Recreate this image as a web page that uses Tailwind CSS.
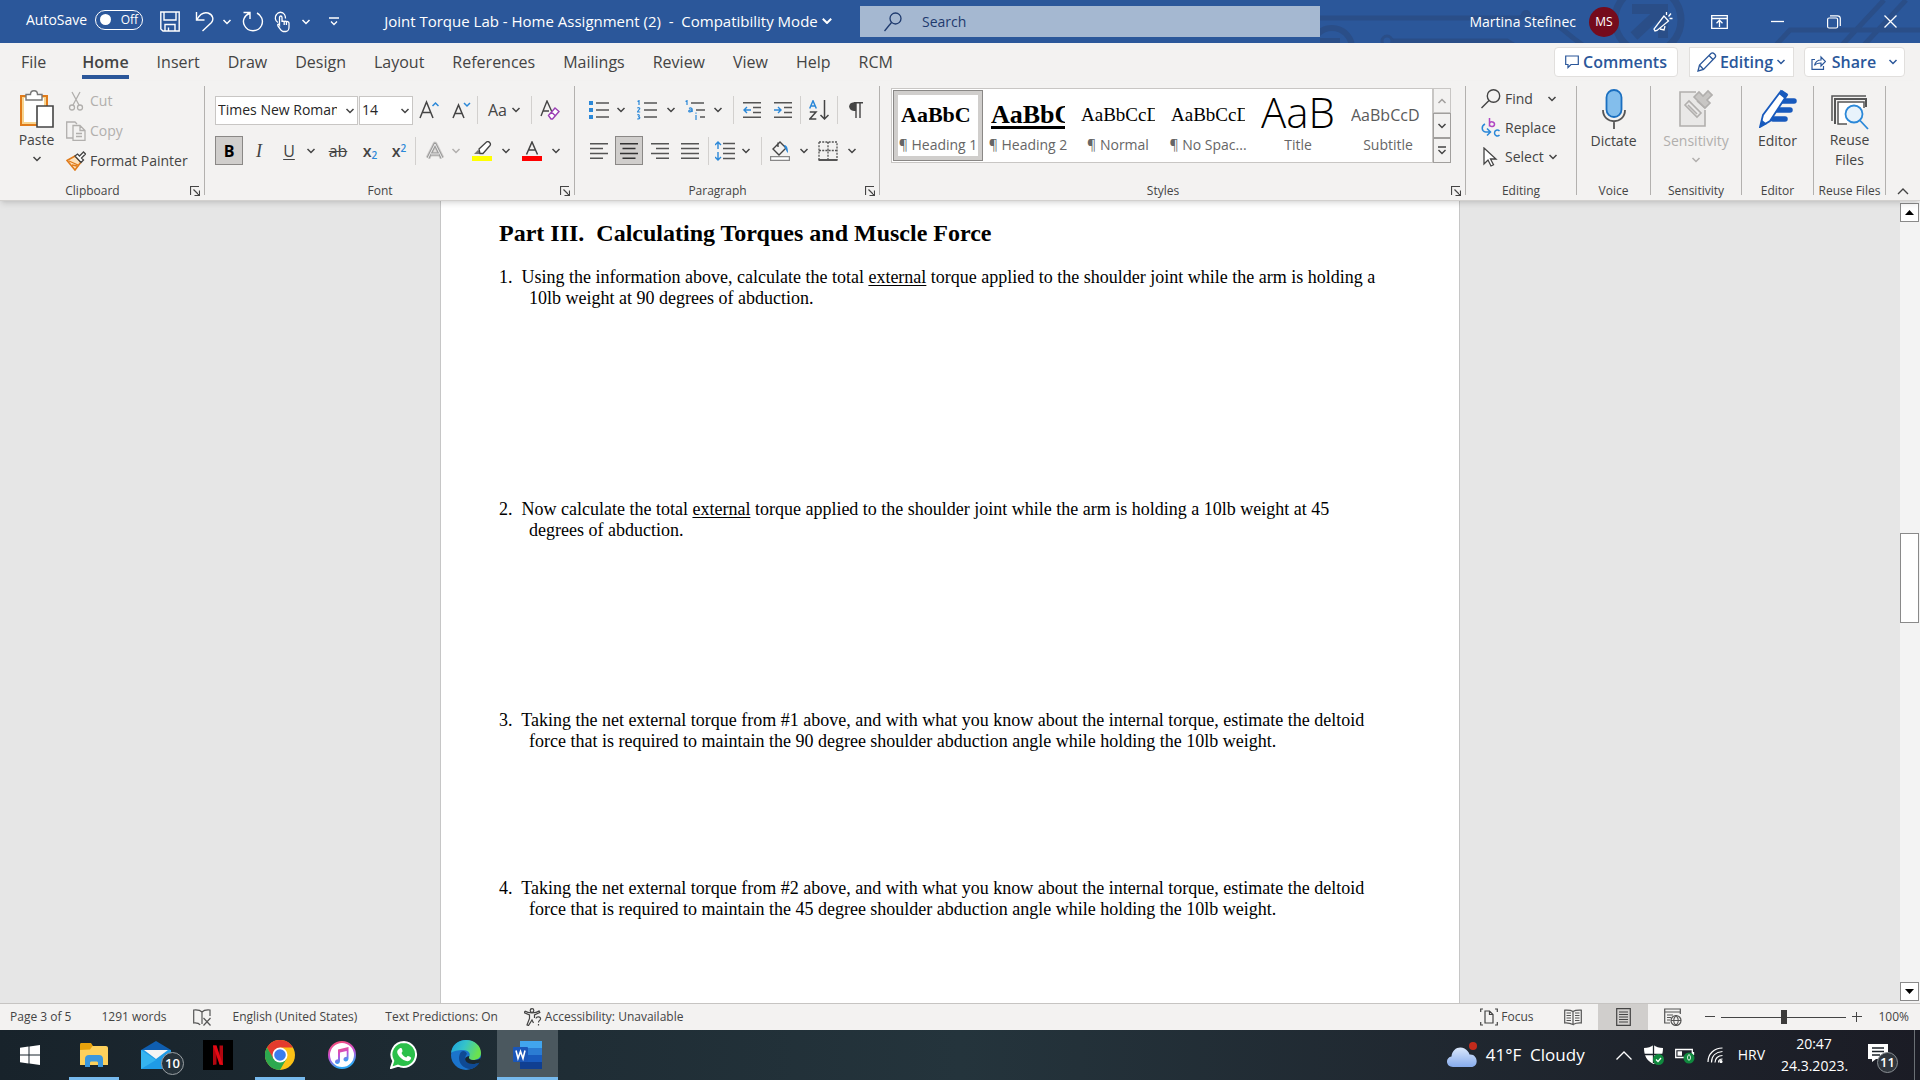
<!DOCTYPE html>
<html lang="en">
<head>
<meta charset="utf-8">
<title>Joint Torque Lab - Home Assignment (2)</title>
<script src="https://cdn.jsdelivr.net/npm/@tailwindcss/browser@4"></script>
</head>
<body class="flex h-screen flex-col overflow-hidden bg-[#e6e6e6] font-['Open_Sans',sans-serif] text-sm text-[#444444]">

<!-- shared glyphs -->
<svg class="hidden">
  <symbol id="chev" viewBox="0 0 10 6"><path d="M1.500 1 5 4.500 8.500 1" fill="none" stroke="currentColor" stroke-width="1.500"/></symbol>
  <symbol id="launch" viewBox="0 0 10 10"><path d="M.5 9V.5H9M3.500 3.500l5.500 5.500M9.500 4.500v5h-5" fill="none" stroke="currentColor" stroke-width="1.200"/></symbol>
</svg>

<!-- title bar -->
<header class="relative flex h-[43px] shrink-0 items-center bg-[#2b579a] text-white">
  <svg class="absolute top-0 right-0 h-[43px] w-[600px]" viewBox="0 0 600 43" fill="none" stroke="#2a4e88" stroke-width="5">
    <path d="M0 18h200l8-4M72 41h115l8 5M214 18c22 0 24 10 50 28M456 45l14-15h130M522 45l42-45M544 45l42-45"/>
    <circle cx="206" cy="15" r="5" fill="#2a4e88" stroke="none"/><circle cx="67" cy="41" r="5" stroke-width="3"/>
    <circle cx="12" cy="48" r="20" stroke-width="6"/><path d="M-1 38h21v8H-1z" fill="#2a4e88" stroke="none"/>
    <circle cx="328" cy="20" r="33" stroke-width="7"/>
    <path d="M312 9h31v29M342 10l-28 26" stroke-width="10"/>
  </svg>
  <div class="relative flex w-full items-center">
    <label class="ml-[26px] flex items-center gap-2 pb-1"><span>AutoSave</span>
      <span class="relative flex h-5 w-12 items-center rounded-full border border-white px-1">
        <input type="checkbox" class="absolute inset-0 m-0 appearance-none">
        <span class="size-[11px] rounded-full bg-white"></span><span class="flex-1 text-right text-xs">Off</span>
      </span>
    </label>
    <button class="ml-[17px] flex" aria-label="Save"><svg class="h-[21px] w-5" viewBox="0 0 20 21" fill="none" stroke="white" stroke-width="1.400"><path d="M.8 1h18.400v19H3L.8 18zM4 1v8h12V1M5 20v-6.500h10V20M8.500 20v-3.500"/></svg></button>
    <button class="ml-[15px] flex" aria-label="Undo"><svg class="h-[21px] w-5" viewBox="0 0 20 21" fill="none" stroke="white" stroke-width="1.400"><path d="M1.500 1v8h8M2 8.500C5 3 9 1 13 2c5 1.500 6 6.500 3.500 9.500L7.500 20"/></svg></button>
    <button class="ml-[7px] flex" aria-label="Undo history"><svg class="h-1.5 w-2.5"><use href="#chev"/></svg></button>
    <button class="ml-[10px] flex" aria-label="Redo"><svg class="h-[21px] w-[22px]" viewBox="0 0 22 21" fill="none" stroke="white" stroke-width="1.400"><path d="M1.500 1.500h6.500v6.500M8 2C2 4.500 0 10 2.500 14.500c3.500 7 13.500 7 17 0C22 9 19 4 15 2"/></svg></button>
    <button class="ml-[10px] flex" aria-label="Touch mode"><svg class="h-[22px] w-[18px]" viewBox="0 0 18 22" fill="none" stroke="white" stroke-width="1.300"><path d="M4 11.500C1 10 .5 6 2.500 3.500c2-3 6-3 8 0 1 1.500 1 2.500 1 4"/><path d="M5.500 14V6.500c0-2 2.500-2 2.500 0V11c0-1 2.200-1 2.200 0 0-1 2.200-1 2.200 0 0-1 2.600-.5 2.600 1v4c0 2-1 4.500-3 4.500H9c-2 0-3-3-5-5.500-1-1.500.5-2.500 1.500-1zM10.200 11v3M12.400 11v3"/></svg></button>
    <button class="ml-[9px] flex" aria-label="Touch mode options"><svg class="h-1.5 w-2.5"><use href="#chev"/></svg></button>
    <button class="ml-[18px] flex" aria-label="Customize Quick Access Toolbar"><svg class="h-[9px] w-[10px]" viewBox="0 0 10 9" fill="none" stroke="white" stroke-width="1.300"><path d="M0 1h10M2 4.500 5 7.500 8 4.500"/></svg></button>
    <button class="ml-[45px] flex items-center gap-1 text-[15px] whitespace-pre"><span>Joint Torque Lab - Home Assignment (2)  -  Compatibility Mode</span><svg class="h-1.5 w-2.5" viewBox="0 0 10 6" fill="none" stroke="white" stroke-width="2"><path d="M.8.800 5 5 9.200.800"/></svg></button>
    <label class="absolute left-[860px] flex h-[31px] w-[460px] items-center gap-5 bg-[#a5b8d1] pl-6 text-[#1e3a6e]">
      <svg class="h-5 w-[18px]" viewBox="0 0 18 20" fill="none" stroke="currentColor" stroke-width="1.300"><circle cx="11.500" cy="6.500" r="5.500"/><path d="M7.500 10.500.5 19"/></svg>
      <input type="search" aria-label="Search" placeholder="Search" class="flex-1 bg-transparent text-sm outline-none placeholder:text-[#1e3a6e]">
    </label>
    <div class="ml-auto flex items-center">
      <span>Martina Stefinec</span>
      <span class="ml-[13px] flex h-[30px] w-[30px] items-center justify-center rounded-full bg-[#750b1c] text-xs">MS</span>
      <button class="ml-[34px] flex" aria-label="Coming soon"><svg class="size-5" viewBox="0 0 20 20" fill="none" stroke="white" stroke-width="1.300"><path d="M11 4 1 17l1 2 2-.5L15.500 9zM7 17l4 1 1-4M13.500 3V0M15.500 4.500 18 1.500M16.500 6.500h3"/></svg></button>
      <button class="ml-[38px] flex" aria-label="Ribbon display options"><svg class="h-[14px] w-[17px]" viewBox="0 0 17 14" fill="none" stroke="white" stroke-width="1.300"><path d="M.7.7h15.600v12.600H.7zM.7 3.500h15.600M8.500 12V5.500M5.500 8.200l3-3 3 3"/></svg></button>
      <button class="ml-[43px] flex" aria-label="Minimize"><svg class="h-[14px] w-[13px]" viewBox="0 0 13 14" stroke="white" stroke-width="1.300"><path d="M0 6.500h13"/></svg></button>
      <button class="ml-[43px] flex" aria-label="Restore"><svg class="size-[14px]" viewBox="0 0 14 14" fill="none" stroke="white" stroke-width="1.200"><rect x=".6" y="3" width="10" height="10" rx="1.500"/><path d="M3 .8h7.500c2 0 2.800 1 2.800 2.800V11"/></svg></button>
      <button class="mr-[23px] ml-[43px] flex" aria-label="Close"><svg class="size-[13px]" viewBox="0 0 13 13" stroke="white" stroke-width="1.300"><path d="M.5.5l12 12M12.500.5l-12 12"/></svg></button>
    </div>
  </div>
</header>

<!-- tab row -->
<nav class="flex h-[38px] shrink-0 items-center bg-[#f3f2f1] pl-[21px] text-base">
  <div class="flex h-full items-center gap-7 leading-none">
    <a href="#" class="mr-2">File</a>
    <a href="#" class="relative font-semibold">Home<span class="absolute inset-x-0 top-[21px] h-1 bg-[#2b579a]"></span></a>
    <a href="#">Insert</a><a href="#">Draw</a><a href="#">Design</a><a href="#">Layout</a><a href="#">References</a><a href="#">Mailings</a><a href="#">Review</a><a href="#">View</a><a href="#">Help</a><a href="#">RCM</a>
  </div>
  <div class="mr-[15px] ml-auto flex items-center font-semibold text-[#2b579a]">
    <button class="flex h-[30px] w-[124px] items-center justify-center gap-1 rounded border border-[#e1dfdd] bg-white"><svg class="size-[14px]" viewBox="0 0 14 14" fill="none" stroke="currentColor" stroke-width="1.200"><path d="M.7 1h12.600v8.500H6L3 12.500v-3H.7z"/></svg>Comments</button>
    <button class="ml-[11px] flex h-[30px] w-[105px] items-center justify-center gap-[3px] border border-[#e1dfdd] bg-white"><svg class="size-5" viewBox="0 0 20 20" fill="none" stroke="currentColor" stroke-width="1.300"><path d="M1 19l1.500-6L14 1.500c2-2 6 2 4 4L6.500 17.500zM12 3.500l4.500 4.500M2.500 13l4 4.500"/></svg>Editing<svg class="h-1.5 w-2.5"><use href="#chev"/></svg></button>
    <button class="ml-[10px] flex h-[30px] w-[101px] items-center justify-center gap-1.5 rounded border border-[#e1dfdd] bg-white"><svg class="size-[15px]" viewBox="0 0 15 15" fill="none" stroke="currentColor" stroke-width="1.200"><path d="M4 4.500H1v9.800h11.500V11M3.500 10.500C4.500 6.500 6.500 5 10 5V2l4.500 4.500L10 11V8C7 8 5 8.500 3.500 10.500z"/></svg>Share<svg class="ml-1.5 h-1.5 w-2.5"><use href="#chev"/></svg></button>
  </div>
</nav>

<!-- ribbon -->
<div class="relative z-10 flex h-[120px] shrink-0 border-b border-[#d2d0ce] bg-[#f3f2f1] pt-[5px] shadow-md" role="toolbar" aria-label="Home ribbon">

  <section class="flex h-[109px] w-[205px] flex-col border-r border-[#b3b1af]">
    <div class="flex flex-1 pl-[14px]">
      <button class="flex w-[45px] flex-col items-center pt-1">
        <svg class="h-[38px] w-[34px]" viewBox="0 0 34 38" fill="none"><path d="M1 6h26v29H1z" fill="#f7d48f" stroke="#e07b1a" stroke-width="2"/><path d="M4 8h20v24H4z" fill="#fff"/><path d="M6 10V4.500h4.500c0-5 7-5 7 0H22V10z" fill="#fff" stroke="#777" stroke-width="1.400"/><path d="M17 16h16v21H17z" fill="#fff" stroke="#444" stroke-width="1.600"/></svg>
        <span class="leading-6">Paste</span><svg class="mt-1 h-1.5 w-2.5"><use href="#chev"/></svg>
      </button>
      <div class="ml-[7px] flex flex-col">
        <button class="flex h-[30px] items-center gap-1 text-[#b1afad]"><svg class="h-5 w-5" viewBox="0 0 20 20" fill="none" stroke="currentColor" stroke-width="1.300"><path d="M6 1l7 13M14 1 7 14"/><circle cx="6" cy="16.500" r="2.500"/><circle cx="14" cy="16.500" r="2.500"/></svg>Cut</button>
        <button class="flex h-[30px] items-center gap-1 text-[#b1afad]"><svg class="h-5 w-5" viewBox="0 0 20 20" fill="none" stroke="currentColor" stroke-width="1.300"><path d="M7 17H.7V1H9l2 2M7 4.500h7l5 5v10H7zM14 4.500v5h5M10 12.500h6M10 15.500h6"/></svg>Copy</button>
        <button class="flex h-[30px] items-center gap-1"><svg class="h-5 w-5" viewBox="0 0 20 20" fill="none" stroke-width="1.300"><path d="M1 9.500 9 5l6 6-6 8z" fill="#fde2bd" stroke="#e07b1a" stroke-width="1.600"/><path d="M3 10l9 4M6 14l5 1" stroke="#e07b1a"/><path d="M9 5l2.500-2 2 2L17.500 1l2 2-4 4 2 2-2.500 2.500z" fill="#fff" stroke="#444"/></svg>Format Painter</button>
      </div>
    </div>
    <div class="flex h-2 items-center text-xs leading-2"><span class="flex-1 pr-[5px] text-center">Clipboard</span><button class="w-[14px]" aria-label="Clipboard settings"><svg class="size-[10px]"><use href="#launch"/></svg></button></div>
  </section>

  <section class="flex h-[109px] w-[370px] flex-col border-r border-[#b3b1af]">
    <div class="flex-1 pt-[9px] pl-[10px]">
      <div class="flex h-[30px] items-center">
        <span class="relative flex h-[29px] w-[143px]"><select aria-label="Font" class="w-full appearance-none border border-[#c8c6c4] bg-white pr-5 pl-0.5 text-sm text-[#262626]"><option>Times New Roman</option></select><svg class="absolute top-3 right-[3px] h-1.5 w-2.5"><use href="#chev"/></svg></span>
        <span class="relative ml-px flex h-[29px] w-[54px]"><select aria-label="Font size" class="w-full appearance-none border border-[#c8c6c4] bg-white pl-0.5 text-sm text-[#262626]"><option>14</option></select><svg class="absolute top-3 right-[3px] h-1.5 w-2.5"><use href="#chev"/></svg></span>
        <button class="flex w-8 justify-center" aria-label="Grow font"><svg class="size-5" viewBox="0 0 20 20" fill="none" stroke="#444" stroke-width="1.500"><path d="M1 18 7.500 2 14 18M3.500 12.500h8"/><path d="M13.500 6 16.500 3l3 3" stroke="#2b88d8"/></svg></button>
        <button class="flex w-8 justify-center" aria-label="Shrink font"><svg class="size-5" viewBox="0 0 20 20" fill="none" stroke="#444" stroke-width="1.500"><path d="M2 18 7.500 5 13 18M4 13.500h7"/><path d="M13 3l3 3 3-3" stroke="#2b88d8"/></svg></button>
        <span class="h-7 w-px bg-[#d2d0ce]"></span>
        <button class="flex w-[53px] items-center justify-center gap-1 text-base" aria-label="Change case">Aa<svg class="h-1.5 w-2.5"><use href="#chev"/></svg></button>
        <span class="h-7 w-px bg-[#d2d0ce]"></span>
        <button class="flex w-9 justify-center" aria-label="Clear formatting"><svg class="size-5" viewBox="0 0 20 20" fill="none" stroke="#444" stroke-width="1.400"><path d="M1 16 7 1l5 11M3 11h6"/><path d="M8.500 15.500 15 8l4 3.500-6.500 7.500h-1.500zM11.500 12l4 4" fill="#fff" stroke="#9b3fb5"/></svg></button>
      </div>
      <div class="mt-[11px] flex h-[29px] items-center">
        <button class="h-[29px] w-7 border border-[#8a8886] bg-[#d0cecc] text-base font-bold text-black">B</button>
        <button class="w-8 font-['Liberation_Serif',serif] text-lg italic">I</button>
        <button class="w-7 text-base underline underline-offset-2">U</button>
        <button class="flex w-4 justify-center" aria-label="Underline options"><svg class="h-1.5 w-2.5"><use href="#chev"/></svg></button>
        <button class="w-[38px] text-base line-through">ab</button>
        <button class="w-[26px] text-base font-semibold whitespace-nowrap">x<sub class="text-[10px] text-[#2b88d8]">2</sub></button>
        <button class="w-8 text-base font-semibold whitespace-nowrap">x<sup class="text-[10px] text-[#2b88d8]">2</sup></button>
        <span class="mr-1 h-7 w-px bg-[#d2d0ce]"></span>
        <button class="flex w-[30px] justify-center" aria-label="Text effects"><svg class="size-5" viewBox="0 0 20 20" fill="none" stroke-linejoin="round"><path d="M3 17 10 3l7 14M6 13h8" stroke="#cfcdcb" stroke-width="5"/><path d="M3 17 10 3l7 14M6 13h8" stroke="#999" stroke-width="3"/><path d="M3 17 10 3l7 14M6 13h8" stroke="#f3f2f1"/></svg></button>
        <button class="flex w-3 justify-center text-[#b1afad]" aria-label="Text effects options"><svg class="h-1.5 w-2.5"><use href="#chev"/></svg></button>
        <button class="ml-0.5 flex w-9 justify-center" aria-label="Highlight color"><svg class="size-5" viewBox="0 0 20 20" fill="none" stroke="#444" stroke-width="1.300"><path d="M2 13l4-4 4 4z" fill="#777" stroke="none"/><path d="M7 8 14.500 1c2-1.500 5 1.500 3.500 3.500L11 12.500 8 12.500z" fill="#fff"/><path d="M0 15h20v5H0z" fill="#ff0" stroke="none"/></svg></button>
        <button class="flex w-3 justify-center" aria-label="Highlight options"><svg class="h-1.5 w-2.5"><use href="#chev"/></svg></button>
        <button class="ml-0.5 flex w-9 justify-center" aria-label="Font color"><svg class="size-5" viewBox="0 0 20 20" fill="none" stroke="#444" stroke-width="1.500"><path d="M4.500 13.500 10 1l5.500 12.500M6.500 9h7"/><path d="M0 15h20v5H0z" fill="#f00" stroke="none"/></svg></button>
        <button class="flex w-3 justify-center" aria-label="Font color options"><svg class="h-1.5 w-2.5"><use href="#chev"/></svg></button>
      </div>
    </div>
    <div class="flex h-2 items-center text-xs leading-2"><span class="flex-1 pr-[5px] text-center">Font</span><button class="w-[14px]" aria-label="Font settings"><svg class="size-[10px]"><use href="#launch"/></svg></button></div>
  </section>

  <section class="flex h-[109px] w-[305px] flex-col border-r border-[#b3b1af]">
    <div class="flex-1 pt-[9px] pl-[10px]">
      <div class="flex h-[30px] items-center">
        <button class="flex w-7 justify-center" aria-label="Bullets"><svg class="size-5" viewBox="0 0 20 20" stroke="#555" stroke-width="1.400"><path d="M7 3h13M7 10h13M7 17h13"/><path d="M0 1h4v4H0zM0 8h4v4H0zM0 15h4v4H0z" fill="#2b88d8" stroke="none"/></svg></button>
        <button class="flex w-4 justify-center" aria-label="Bullet options"><svg class="h-1.5 w-2.5"><use href="#chev"/></svg></button>
        <button class="flex w-9 justify-center" aria-label="Numbering"><svg class="size-5" viewBox="0 0 20 20" fill="none" stroke="#555" stroke-width="1.400"><path d="M7 3h13M7 10h13M7 17h13"/><path d="M.5 1.500 2 .7V5M.3 8.200c1-1 2.700-.5 2.400.6L.4 12h2.800M.3 15c1.500-.8 3 .8 1 1.800 2.500 0 1.500 2.700-1 2" stroke="#2b88d8" stroke-width="1.200"/></svg></button>
        <button class="flex w-3 justify-center" aria-label="Numbering options"><svg class="h-1.5 w-2.5"><use href="#chev"/></svg></button>
        <button class="flex w-9 justify-center" aria-label="Multilevel list"><svg class="size-5" viewBox="0 0 20 20" fill="none" stroke="#555" stroke-width="1.400"><path d="M6 3h13M11 10h9M15 17h5"/><path d="M.5 1.500 2 .7V5M4 8.500c1.500-1 3.200-.5 3.200 1V12M7 10c-2-.3-3.300.2-3.300 1.200s2 1 3.300-.2M11 15v5M11 12.500v1.200" stroke="#2b88d8" stroke-width="1.200"/></svg></button>
        <button class="mr-[10px] flex w-[10px] justify-center" aria-label="Multilevel options"><svg class="h-1.5 w-2.5"><use href="#chev"/></svg></button>
        <span class="h-7 w-px bg-[#d2d0ce]"></span>
        <button class="flex w-[35px] justify-center" aria-label="Decrease indent"><svg class="size-[18px]" viewBox="0 0 18 18" fill="none" stroke="#555" stroke-width="1.400"><path d="M0 1.700h18M10 6.500h8M10 11.500h8M0 16.300h18"/><path d="M8 9H1M4 6 1 9l3 3" stroke="#2b88d8"/></svg></button>
        <button class="mr-[3px] flex w-7 justify-center" aria-label="Increase indent"><svg class="size-[18px]" viewBox="0 0 18 18" fill="none" stroke="#555" stroke-width="1.400"><path d="M0 1.700h18M10 6.500h8M10 11.500h8M0 16.300h18"/><path d="M0 9h7M4 6l3 3-3 3" stroke="#2b88d8"/></svg></button>
        <span class="h-7 w-px bg-[#d2d0ce]"></span>
        <button class="flex w-9 justify-center" aria-label="Sort"><svg class="size-5" viewBox="0 0 20 20" fill="none" stroke="#444" stroke-width="1.500"><path d="M.7 8.500 4 .8l3.300 7.700M2 6h4" stroke="#2b88d8"/><path d="M.8 12H7L.8 19H7.300M15.500 0v19M11.500 15l4 4 4-4"/></svg></button>
        <span class="h-7 w-px bg-[#d2d0ce]"></span>
        <button class="flex w-9 justify-center" aria-label="Show paragraph marks"><svg class="h-4 w-[14px]" viewBox="0 0 14 16" fill="none" stroke="#444" stroke-width="1.400"><path d="M7 1v15M11 1v15M14 .8H5"/><path d="M7 .2H5C-1.500.2-1.500 9 5 9h2z" fill="#444" stroke="none"/></svg></button>
      </div>
      <div class="mt-[11px] flex h-[29px] items-center">
        <button class="flex w-7 justify-center" aria-label="Align left"><svg class="size-[18px]" viewBox="0 0 18 18" stroke="#555" stroke-width="1.400"><path d="M0 1.700h18M0 6.500h13M0 11.500h18M0 16.300h13"/></svg></button>
        <button class="mx-0.5 flex h-[29px] w-7 items-center justify-center border border-[#8a8886] bg-[#d0cecc]" aria-label="Center"><svg class="size-[18px]" viewBox="0 0 18 18" stroke="#333" stroke-width="1.400"><path d="M0 1.700h18M2.500 6.500h13M0 11.500h18M2.500 16.300h13"/></svg></button>
        <button class="flex w-[30px] justify-center" aria-label="Align right"><svg class="size-[18px]" viewBox="0 0 18 18" stroke="#555" stroke-width="1.400"><path d="M0 1.700h18M5 6.500h13M0 11.500h18M5 16.300h13"/></svg></button>
        <button class="mr-[3px] flex w-[30px] justify-center" aria-label="Justify"><svg class="size-[18px]" viewBox="0 0 18 18" stroke="#555" stroke-width="1.400"><path d="M0 1.700h18M0 6.500h18M0 11.500h18M0 16.300h18"/></svg></button>
        <span class="h-7 w-px bg-[#d2d0ce]"></span>
        <button class="flex w-8 justify-center" aria-label="Line spacing"><svg class="size-5" viewBox="0 0 20 20" fill="none" stroke="#555" stroke-width="1.400"><path d="M8 2.500h12M8 7.500h12M8 12.500h12M8 17.500h12"/><path d="M3 1v7M0 4l3-3 3 3M3 11v8M0 16l3 3 3-3" stroke="#2b88d8"/></svg></button>
        <button class="mr-[10px] flex w-[10px] justify-center" aria-label="Line spacing options"><svg class="h-1.5 w-2.5"><use href="#chev"/></svg></button>
        <span class="h-7 w-px bg-[#d2d0ce]"></span>
        <button class="flex w-9 justify-center" aria-label="Shading"><svg class="size-5" viewBox="0 0 20 20" fill="none" stroke="#444" stroke-width="1.400"><path d="M3 8l7-7 6 6-7 7zM8 1.500V6"/><path d="M14 4c2.500 0 4 2 4 8-1.500-1-2-3.500-3-5z" fill="#2b88d8" stroke="none"/><path d="M.6 15.600h18.800v3.800H.6z" fill="#fff" stroke="#888" stroke-width="1.200"/></svg></button>
        <button class="flex w-3 justify-center" aria-label="Shading options"><svg class="h-1.5 w-2.5"><use href="#chev"/></svg></button>
        <button class="flex w-9 justify-center" aria-label="Borders"><svg class="size-5" viewBox="0 0 20 20" fill="none" stroke="#555" stroke-width="1.300"><path d="M1 1h18v18M1 1v18M10 1v18M1 9.500h18" stroke-dasharray="2 1.200"/><path d="M.5 19h19" stroke-width="2"/></svg></button>
        <button class="flex w-3 justify-center" aria-label="Border options"><svg class="h-1.5 w-2.5"><use href="#chev"/></svg></button>
      </div>
    </div>
    <div class="flex h-2 items-center text-xs leading-2"><span class="flex-1 pr-[5px] text-center">Paragraph</span><button class="w-[14px]" aria-label="Paragraph settings"><svg class="size-[10px]"><use href="#launch"/></svg></button></div>
  </section>

  <section class="flex h-[109px] min-w-0 flex-1 flex-col border-r border-[#b3b1af]">
    <div class="flex flex-1 pt-0.5 pr-[14px] pl-[11px]">
      <div class="flex h-[75px] flex-1 overflow-hidden border border-[#c8c6c4] bg-white p-px text-sm text-[#666]">
        <button class="flex h-[71px] w-[90px] shrink-0 flex-col items-center border border-[#8a8886] bg-white whitespace-nowrap inset-ring-4 inset-ring-[#d0cecc]"><span class="flex h-10 w-[74px] items-end overflow-hidden font-['Liberation_Serif',serif] text-[22px] leading-8 font-bold text-black">AaBbC</span><span class="mt-1 leading-5">¶ Heading 1</span></button>
        <button class="flex h-[71px] w-[90px] shrink-0 flex-col items-center pt-px whitespace-nowrap"><span class="flex h-10 w-[74px] items-end overflow-hidden font-['Liberation_Serif',serif] text-[26px] leading-8 font-bold text-black underline decoration-3 underline-offset-3">AaBbC</span><span class="mt-1 leading-5">¶ Heading 2</span></button>
        <button class="flex h-[71px] w-[90px] shrink-0 flex-col items-center pt-px whitespace-nowrap"><span class="flex h-10 w-[74px] items-end overflow-hidden font-['Liberation_Serif',serif] text-[19px] leading-8 text-black">AaBbCcD</span><span class="mt-1 leading-5">¶ Normal</span></button>
        <button class="flex h-[71px] w-[90px] shrink-0 flex-col items-center pt-px whitespace-nowrap"><span class="flex h-10 w-[74px] items-end overflow-hidden font-['Liberation_Serif',serif] text-[19px] leading-8 text-black">AaBbCcD</span><span class="mt-1 leading-5">¶ No Spac...</span></button>
        <button class="flex h-[71px] w-[90px] shrink-0 flex-col items-center pt-2 whitespace-nowrap"><span class="flex h-[33px] w-[74px] items-end overflow-hidden text-[42px] leading-[38px] font-light text-black">AaB</span><span class="mt-1 leading-5">Title</span></button>
        <button class="flex h-[71px] w-[90px] shrink-0 flex-col items-center pt-px whitespace-nowrap"><span class="flex h-10 w-[74px] items-end overflow-hidden text-base leading-8 text-[#5a5a5a]">AaBbCcD</span><span class="mt-1 leading-5">Subtitle</span></button>
      </div>
      <div class="flex h-[75px] w-[18px] flex-col">
        <button class="flex flex-1 items-center justify-center border border-[#c8c6c4] text-[#a19f9d]" aria-label="Previous styles"><svg class="h-1.5 w-2.5 rotate-180"><use href="#chev"/></svg></button>
        <button class="flex flex-1 items-center justify-center border border-[#a19f9d]" aria-label="Next styles"><svg class="h-1.5 w-2.5"><use href="#chev"/></svg></button>
        <button class="flex flex-1 items-center justify-center border border-[#a19f9d]" aria-label="More styles"><svg class="h-[9px] w-[10px]" viewBox="0 0 10 9" fill="none" stroke="#444" stroke-width="1.400"><path d="M1 1h8M1.500 4 5 7.500 8.500 4"/></svg></button>
      </div>
    </div>
    <div class="flex h-2 items-center text-xs leading-2"><span class="flex-1 pr-[5px] text-center">Styles</span><button class="w-[14px]" aria-label="Styles settings"><svg class="size-[10px]"><use href="#launch"/></svg></button></div>
  </section>

  <section class="flex h-[109px] w-[111px] flex-col border-r border-[#b3b1af]">
    <div class="flex flex-1 flex-col items-start pl-[15px]">
      <button class="flex h-[26px] items-center gap-1"><svg class="h-5 w-5" viewBox="0 0 20 20" fill="none" stroke="#444" stroke-width="1.400"><circle cx="12.500" cy="7" r="6.200"/><path d="M8 11.500.5 19"/></svg>Find<svg class="ml-2.5 h-1.5 w-2.5"><use href="#chev"/></svg></button>
      <button class="flex h-[31px] items-center gap-1"><svg class="h-5 w-5" viewBox="0 0 20 20" fill="none" stroke-width="1.500"><path d="M8.500 0v8.500M8.500 5.500c1-2.500 5-2 5 .7s-4 3.300-5 .8" stroke="#b146c2"/><path d="M18.500 13c-2-2-5-.8-5 2s3 4 5 2M4 6C0 8 .5 13.500 4.500 14H9M6 10.500l3.500 3.500L6 17.500" stroke="#2b88d8"/></svg>Replace</button>
      <button class="flex h-[28px] items-center gap-1"><svg class="h-5 w-5" viewBox="0 0 20 20" fill="#fff" stroke="#444" stroke-width="1.300"><path d="M3 1v16l4-4 3 6 2.500-1.200L9.500 12H15z"/></svg>Select<svg class="h-1.5 w-2.5"><use href="#chev"/></svg></button>
    </div>
    <div class="h-2 text-center text-xs leading-2">Editing</div>
  </section>

  <section class="flex h-[109px] w-[74px] flex-col border-r border-[#b3b1af]">
    <button class="flex flex-1 flex-col items-center pt-[3px]"><svg class="h-10 w-6" viewBox="0 0 24 40" fill="none" stroke="#555" stroke-width="1.800"><rect x="4.500" y="1" width="15" height="27" rx="7.500" fill="#83beec" stroke="#1a6fc0"/><path d="M1 21c0 15 22 15 22 0M12 32.500V40"/></svg><span class="leading-6">Dictate</span></button>
    <div class="h-2 text-center text-xs leading-2">Voice</div>
  </section>

  <section class="flex h-[109px] w-[91px] flex-col border-r border-[#b3b1af]">
    <button class="flex flex-1 flex-col items-center pt-0.5 text-[#b1afad]"><svg class="h-[40px] w-[34px]" viewBox="0 0 34 40" fill="none" stroke="currentColor" stroke-width="1.600"><path d="M17 4H1v34h25V22" fill="#e9e8e7"/><path d="M6 17l4-4 12 12-4 4zM9 17l9 9"/><path d="M15 9l5-5 4 4 5-5 4 4-5 5 3 3-5 5z" fill="#c8c6c4"/><path d="M18 13l8 7"/></svg><span class="mt-px leading-6">Sensitivity</span><svg class="mt-1 h-1.5 w-2.5"><use href="#chev"/></svg></button>
    <div class="h-2 text-center text-xs leading-2">Sensitivity</div>
  </section>

  <section class="flex h-[109px] w-[72px] flex-col border-r border-[#b3b1af]">
    <button class="flex flex-1 flex-col items-center pt-[3px]"><svg class="h-[39px] w-[38px]" viewBox="0 0 38 39" fill="none"><path d="M22 12h13M18 21h13M14 30h12" stroke="#185abd" stroke-width="5.500" stroke-linecap="round"/><path d="M1 38l3-12L22 2l6 4L11 32z" fill="#fff" stroke="#185abd" stroke-width="1.800"/><path d="M20 5l3-4 6 4-3 5zM1 38l2-7 5 4z" fill="#185abd"/></svg><span class="mt-px leading-6">Editor</span></button>
    <div class="h-2 text-center text-xs leading-2">Editor</div>
  </section>

  <section class="flex h-[109px] w-[72px] flex-col border-r border-[#b3b1af]">
    <button class="flex flex-1 flex-col items-center pt-[9px]"><svg class="h-[35px] w-[38px]" viewBox="0 0 38 35" fill="none" stroke="#555" stroke-width="1.500"><path d="M1 26V1h34"/><path d="M4 29V4h31v8" stroke-width="2"/><path d="M16 29H7V7h26v6" fill="#fff"/><circle cx="23" cy="19" r="8.500" fill="#e8f3fb" stroke="#2b88d8" stroke-width="1.800"/><path d="M29 25.500l8 8.500" stroke="#2b88d8" stroke-width="1.800"/></svg><span class="text-center leading-5">Reuse<br>Files</span></button>
    <div class="h-2 text-center text-xs leading-2 whitespace-nowrap">Reuse Files</div>
  </section>
  <button class="flex h-[109px] w-[34px] items-end justify-center" aria-label="Collapse the ribbon"><svg class="h-[7px] w-3" viewBox="0 0 12 7" fill="none" stroke="#444" stroke-width="1.400"><path d="M1 6l5-5 5 5"/></svg></button>
</div>

<!-- document area -->
<main class="flex min-h-0 flex-1">
  <div class="flex min-w-0 flex-1 justify-center overflow-hidden">
    <article class="w-full max-w-[1020px] border-x border-[#c6c6c6] bg-white px-[58px] pt-5 font-['Liberation_Serif',serif] text-lg leading-[21px] text-black">
      <h1 class="text-2xl leading-6 font-bold whitespace-pre">Part III.  Calculating Torques and Muscle Force</h1>
      <ol class="pl-[30px] -indent-[30px]">
        <li class="mt-[22px]">1.&nbsp; Using the information above, calculate the total <u class="underline-offset-2">external</u> torque applied to the shoulder joint while the arm is holding a<br>10lb weight at 90 degrees of abduction.</li>
        <li class="mt-[190px]">2.&nbsp; Now calculate the total <u class="underline-offset-2">external</u> torque applied to the shoulder joint while the arm is holding a 10lb weight at 45<br>degrees of abduction.</li>
        <li class="mt-[169px]">3.&nbsp; Taking the net external torque from #1 above, and with what you know about the internal torque, estimate the deltoid<br>force that is required to maintain the 90 degree shoulder abduction angle while holding the 10lb weight.</li>
        <li class="mt-[126px]">4.&nbsp; Taking the net external torque from #2 above, and with what you know about the internal torque, estimate the deltoid<br>force that is required to maintain the 45 degree shoulder abduction angle while holding the 10lb weight.</li>
      </ol>
    </article>
  </div>
  <div class="flex w-5 flex-col bg-[#f3f3f3] py-0.5 pr-px">
    <button class="flex h-[19px] items-center justify-center border border-[#8a8a8a] bg-white" aria-label="Scroll up"><svg class="h-[5px] w-[9px]" viewBox="0 0 9 5"><path d="M0 5 4.500 0 9 5z"/></svg></button>
    <div class="grow-[311]"></div>
    <div class="h-[90px] border border-[#8a8a8a] bg-white"></div>
    <div class="grow-[360]"></div>
    <button class="flex h-[19px] items-center justify-center border border-[#8a8a8a] bg-white" aria-label="Scroll down"><svg class="h-[5px] w-[9px]" viewBox="0 0 9 5"><path d="M0 0 4.500 5 9 0z"/></svg></button>
  </div>
</main>

<!-- status bar -->
<footer class="flex h-[27px] shrink-0 items-center border-t border-[#c6c4c2] bg-[#f3f2f1] pl-[10px] text-xs whitespace-nowrap">
  <button>Page 3 of 5</button>
  <button class="ml-[30px]">1291 words</button>
  <button class="ml-[26px] flex" aria-label="Proofing errors"><svg class="h-[17px] w-[18px]" viewBox="0 0 18 17" fill="none" stroke="#555" stroke-width="1.200"><path d="M9 3v12M9 3C7 .8 4 .7.700 1v13c3-.3 5 0 6.500 1.800M9 3c2-2.200 5-2.300 8-2v6M10.500 9l7 7.500M17.500 9l-7 7.500"/></svg></button>
  <button class="ml-[22px]">English (United States)</button>
  <button class="ml-[28px]">Text Predictions: On</button>
  <button class="ml-[26px] flex items-center gap-[3px]"><svg class="size-[18px]" viewBox="0 0 18 18" fill="none" stroke="#444" stroke-width="1.200"><circle cx="8" cy="2.500" r="1.800"/><path d="M1 3c3 2.500 11 2.500 14 0l.8 1.500L10.500 7v3M1 3 .5 4.700 5.500 7v3.500L3 17l1.500.5L8 12l1.500 3M12 10.500c.5-2.500 5-2 4.500.5-.2 1.500-2 1.500-2 3.500M14.500 16v1.500"/></svg>Accessibility: Unavailable</button>
  <div class="ml-auto flex h-full items-center">
    <button class="flex items-center gap-[3px]"><svg class="size-[18px]" viewBox="0 0 18 18" fill="none" stroke="#444" stroke-width="1.200"><path d="M3 1H.7v3M15 1h2.300v3M3 17H.7v-3M15 17h2.300v-3M5 3h4.500L13 6.500V15H5zM9.500 3v3.500H13"/></svg>Focus</button>
    <button class="ml-[31px] flex" aria-label="Read mode"><svg class="h-[17px] w-[18px]" viewBox="0 0 18 17" fill="none" stroke="#555" stroke-width="1.200"><path d="M9 2.500v13C6 14 3 13.800.700 14V1.200C4 1 7 1.200 9 2.500zM9 2.500c2-1.300 5-1.500 8.300-1.300V14c-3-.2-5.500 0-8.300 1.500M2.500 4H7M2.500 6.500H7M2.500 9H7M2.500 11.500H7M11 4h4.500M11 6.500h4.500M11 9h4.500M11 11.500h4.500"/></svg></button>
    <button class="ml-4 flex h-full w-[50px] items-center justify-center bg-[#d0cecc]" aria-label="Print layout"><svg class="h-[18px] w-[15px]" viewBox="0 0 15 18" fill="none" stroke="#444" stroke-width="1.200"><path d="M.7.700h13.600v16.600H.7zM3 4h9M3 6.500h9M3 9h9M3 11.500h9M3 14h9"/></svg></button>
    <button class="ml-4 flex" aria-label="Web layout"><svg class="size-[18px]" viewBox="0 0 18 18" fill="none" stroke="#555" stroke-width="1.200"><path d="M6 15H.7V1h15.600v5M.7 4h15.600M3 7h6M3 9.500h4M3 12h3"/><circle cx="12" cy="12.500" r="5"/><path d="M7 12.500h10M12 7.500c-3 3-3 7 0 10M12 7.500c3 3 3 7 0 10"/></svg></button>
    <button class="ml-[23px] flex" aria-label="Zoom out"><svg class="size-[10px]" viewBox="0 0 10 10" stroke="#444"><path d="M0 4.500h10"/></svg></button>
    <input type="range" aria-label="Zoom" min="10" max="190" value="100" class="mx-1.5 h-[14px] w-[125px] appearance-none bg-[linear-gradient(#444,#444)] bg-[length:100%_1px] bg-center bg-no-repeat [&::-webkit-slider-thumb]:h-[14px] [&::-webkit-slider-thumb]:w-1.5 [&::-webkit-slider-thumb]:appearance-none [&::-webkit-slider-thumb]:bg-[#3b3a39]">
    <button class="flex" aria-label="Zoom in"><svg class="size-[10px]" viewBox="0 0 10 10" stroke="#444"><path d="M0 4.500h10M4.500 0v10"/></svg></button>
    <button class="mr-[11px] ml-[16px]">100%</button>
  </div>
</footer>

<!-- taskbar -->
<footer class="flex h-[50px] shrink-0 items-stretch bg-linear-to-r from-[#18232b] via-[#24343c] to-[#1b1c25] text-white">
  <button class="flex w-[63px] items-center pl-5" aria-label="Start"><svg class="size-5" viewBox="0 0 20 20" fill="#fff"><path d="M0 2.800 8.500 1.600v8H0zM9.500 1.400 20 0v9.600H9.500zM0 10.500h8.500v8L0 17.300zM9.500 10.500H20V20L9.500 18.600z"/></svg></button>
  <button class="relative flex w-[62px] items-center justify-center" aria-label="File Explorer"><svg class="h-6 w-7" viewBox="0 0 28 24"><path d="M0 1.500C0 .5.500 0 1.500 0H11l2 3v6H0z" fill="#e8a20c"/><path d="M0 7 10 6.500 12.500 3H26c1 0 2 .8 2 2v17H0z" fill="#fdd05b"/><path d="M5 24v-8c0-2.500 1.500-4 4-4h10c2.500 0 4 1.500 4 4v8h-5v-4c0-1-.5-1.500-1.500-1.500h-5c-1 0-1.500.5-1.500 1.500v4z" fill="#3b97dd"/></svg><span class="absolute inset-x-[6px] bottom-0 h-[3px] bg-[#76b9ed]"></span></button>
  <button class="relative flex w-[62px] items-center justify-center" aria-label="Mail"><svg class="h-7 w-[30px]" viewBox="0 0 30 28"><path d="M15 0 30 9v5H0V9z" fill="#0f5eb0"/><path d="M0 9h30v19H0z" fill="#1f9be6"/><path d="M3 9h24L15 18z" fill="#f4f4f4"/><path d="M0 9l15 10L0 28z" fill="#35b4f0"/></svg><span class="absolute right-[3px] bottom-[5px] flex size-[23px] items-center justify-center rounded-full border border-[#9aa0a4] bg-[#26323a] text-[13px] font-semibold">10</span></button>
  <button class="flex w-[62px] items-center justify-center" aria-label="Netflix"><svg class="size-[30px]" viewBox="0 0 30 30"><path d="M0 0h30v30H0z"/><path d="M10 5.500h3.500v19L10 25zM16.500 5.500H20V25l-3.500-.5z" fill="#b1060f"/><path d="M10 5.500h3.500L20 25l-3.500-.5z" fill="#e50914"/></svg></button>
  <button class="relative flex w-[62px] items-center justify-center" aria-label="Google Chrome"><svg class="size-[30px]" viewBox="0 0 30 30"><circle cx="15" cy="15" r="15" fill="#fbc116"/><path d="M2 7.500A15 15 0 0 1 28 7.500H15L8 19z" fill="#e33b2e"/><path d="M2 7.500A15 15 0 0 0 15 30l6.500-11.200L15 15 8.500 18.800z" fill="#2da94f"/><circle cx="15" cy="15" r="7.500" fill="#fff"/><circle cx="15" cy="15" r="5.800" fill="#3a7cec"/></svg><span class="absolute inset-x-[6px] bottom-0 h-[3px] bg-[#76b9ed]"></span></button>
  <button class="flex w-[62px] items-center justify-center" aria-label="iTunes"><svg class="size-7" viewBox="0 0 28 28"><defs><linearGradient id="it" x1="0" y1="0" x2=".3" y2="1"><stop offset="0" stop-color="#ff4e6b"/><stop offset=".55" stop-color="#c44fd8"/><stop offset="1" stop-color="#2fa7f5"/></linearGradient></defs><circle cx="14" cy="14" r="13" fill="#fff" stroke="url(#it)" stroke-width="2"/><path d="M10 8.500 20.500 6v11.500c0 4-5.500 3.500-5 .5.300-1.500 1.800-2 3.200-2.200V10L12 11.500v8.500c0 4-5.500 3.500-5 .5.300-1.500 1.800-2 3-2.200z" fill="url(#it)"/></svg></button>
  <button class="flex w-[62px] items-center justify-center" aria-label="WhatsApp"><svg class="size-7" viewBox="0 0 28 28"><path d="M14 1a12.500 12.500 0 1 1-6 23.700L1 27l2.300-7A12.500 12.500 0 0 1 14 1z" fill="#2bc04a" stroke="#fff" stroke-width="2"/><path d="M9.500 7.500c1.500-1 2.300-.5 2.800 1.500.5 1.500 0 2-.8 3 1 2.200 2.500 3.500 4.700 4.500 1.200-1.500 1.500-2 3.300-1 2 1 2 1.500 1 3-1.500 2.300-4 2-7 .5-3-1.700-5-4-6-6.500-.7-2-.2-3.500 2-5z" fill="#fff"/></svg></button>
  <button class="flex w-[62px] items-center justify-center" aria-label="Microsoft Edge"><svg class="size-[30px]" viewBox="0 0 30 30"><defs><linearGradient id="eg" x1="0" y1="0" x2="1" y2=".3"><stop offset="0" stop-color="#1ba0e0"/><stop offset=".5" stop-color="#35c3c9"/><stop offset="1" stop-color="#6be14e"/></linearGradient></defs><circle cx="15" cy="15" r="15" fill="#1b74cc"/><path d="M0 13C1 5 7 0 15 0c9 0 15 6 15 13 0 5-4 7-8 7s-5-1.500-4-3c2-3 0-7-6-7-5 0-10 1-12 3z" fill="url(#eg)"/><path d="M10 12c-5 7 0 17 10 17 4-1 7-3.500 8.500-6.500-5 2.500-13 1.500-14-4.500-.3-2 .5-3 1.500-4-1-3-4-4-6-2z" fill="#0f4a94"/><path d="M28.500 22.500A15 15 0 0 0 30 17c-1 2-4 3.500-8 3-3 0-4.500-1.500-4-3l.3-1c-3 .5-4.500 2-4 4 1.500 4.500 9 5 14.200 2.500z" fill="#1a272f"/></svg></button>
  <button class="relative flex w-[61px] items-center justify-center bg-[#4b585f]" aria-label="Word"><svg class="h-7 w-[29px]" viewBox="0 0 29 28"><path d="M7 0h22v7H7z" fill="#41a5ee"/><path d="M7 7h22v7H7z" fill="#2b7cd3"/><path d="M7 14h22v7H7z" fill="#185abd"/><path d="M7 21h22v7H7z" fill="#103f91"/><rect y="6" width="15" height="15" rx="1" fill="#1a56b8"/><path d="M3 9.500 5 17.500 7.500 10.500 10 17.500l2-8" fill="none" stroke="#fff" stroke-width="1.600"/></svg><span class="absolute inset-x-0 bottom-0 h-[3px] bg-[#76b9ed]"></span></button>

  <div class="ml-auto flex items-center">
    <button class="flex items-center gap-[9px] text-[17px] whitespace-pre"><svg class="h-[26px] w-[30px]" viewBox="0 0 30 26"><defs><linearGradient id="cl" x1="0" y1="0" x2="0" y2="1"><stop offset="0" stop-color="#dbe8fb"/><stop offset="1" stop-color="#86abec"/></linearGradient></defs><path d="M6 25C-1.500 25-2 15.500 4.500 14.500 5 7 12 3.500 17.500 6.500 20 8 22 10 22.500 12.500 31 11.500 32.500 25 24 25z" fill="url(#cl)"/><circle cx="26" cy="4" r="4" fill="#c42b1c"/></svg>41°F  Cloudy</button>
    <button class="ml-[31px] flex" aria-label="Show hidden icons"><svg class="h-[9px] w-4" viewBox="0 0 16 9" fill="none" stroke="#fff" stroke-width="1.300"><path d="M.5 8.500 8 1l7.500 7.500"/></svg></button>
    <button class="ml-3 flex" aria-label="Windows Security"><svg class="size-5" viewBox="0 0 20 20"><path d="M9.500 0C12 2 15 3 19 3c0 8-3 13-9.500 16C3 16 0 11 0 3c4 0 7-1 9.500-3z" fill="#fff"/><path d="M9.500 0v18M0 9.500h19" stroke="#1b2229" stroke-width="1.300"/><circle cx="14.500" cy="14.500" r="5.500" fill="#10893e"/><path d="M12 14.500l2 2 3-3.500" fill="none" stroke="#fff" stroke-width="1.300"/></svg></button>
    <button class="ml-[11px] flex" aria-label="Battery"><svg class="h-[18px] w-5" viewBox="0 0 20 18"><path d="M.7 3.500h16.600v8H.7zM18.500 6v3" fill="none" stroke="#fff" stroke-width="1.300"/><path d="M2.500 5.300H7v4.400H2.500z" fill="#fff"/><circle cx="14" cy="12" r="5.500" fill="#10893e"/><path d="M14 8.500c2 2 2 4.500 0 6-2-1.500-2-4 0-6z" fill="none" stroke="#fff"/></svg></button>
    <button class="ml-3 flex" aria-label="Network"><svg class="size-4" viewBox="0 0 16 16" fill="none" stroke="#fff" stroke-width="1.200"><path d="M1 15C1 7 7 1 15.500 1M4.500 15.500C4.500 9 9 5 15.500 4.500M8 15.500c0-4 3-7 7.500-7M11.500 15.500c0-2 1.500-3.500 4-3.500"/><circle cx="14" cy="14.500" r="1" fill="#fff"/></svg></button>
    <span class="ml-[15px] text-sm">HRV</span>
    <time class="ml-4 w-[66px] text-center text-sm leading-[22px]">20:47<br>24.3.2023.</time>
    <button class="relative ml-[21px] flex h-[30px] w-[30px] items-start pt-1" aria-label="Notifications"><svg class="h-[18px] w-5" viewBox="0 0 20 18"><path d="M0 0h20v15H8l-4 3v-3H0z" fill="#fff"/><path d="M4 4h12M4 7.500h12M4 11h8" stroke="#1b2229" stroke-width="1.300"/></svg><span class="absolute top-[12px] right-0 flex size-[21px] items-center justify-center rounded-full border border-[#8a8f94] bg-[#30363d] text-[13px] font-semibold">11</span></button>
  </div>
  <div class="mr-[5px] ml-4 w-px bg-[#6b7075]"></div>
</footer>
</body>
</html>
